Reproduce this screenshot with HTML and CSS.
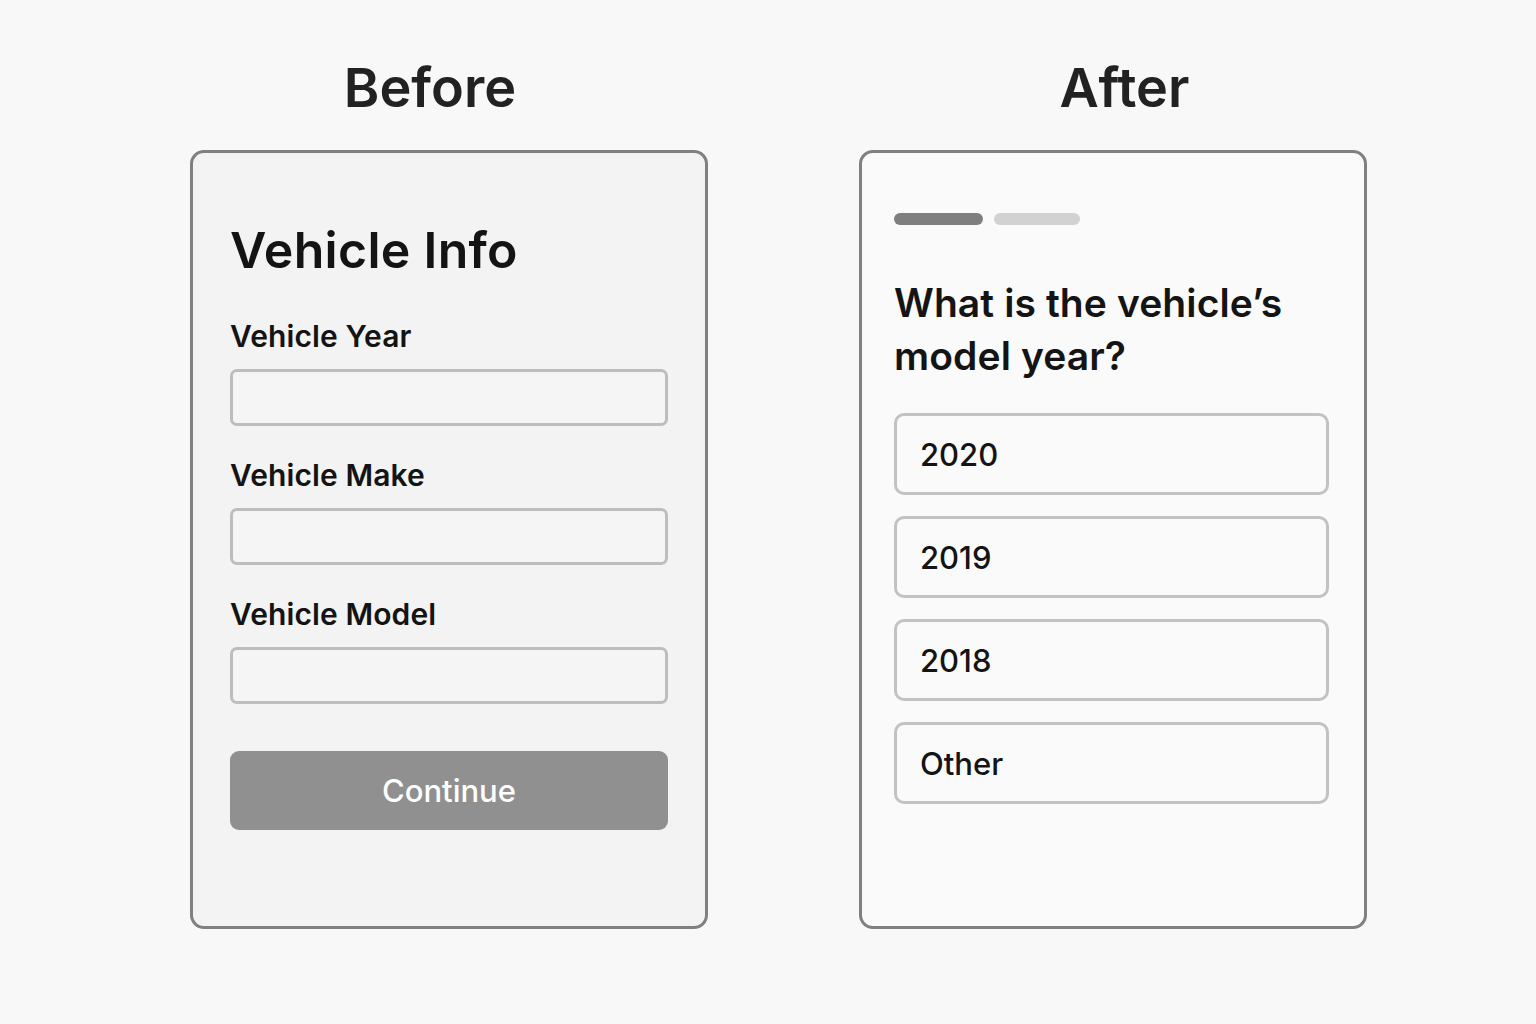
FILE: index.html
```html
<!DOCTYPE html>
<html lang="en">
<head>
<meta charset="utf-8">
<title>Before / After</title>
<link rel="stylesheet" href="styles.css">
</head>
<body>
<main class="compare">
  <section class="col col-before">
    <h2 class="col-title title-before">Before</h2>
    <div class="card card-before">
      <h1 class="form-title">Vehicle Info</h1>
      <label class="field-label">Vehicle Year</label>
      <div class="field-input"></div>
      <label class="field-label">Vehicle Make</label>
      <div class="field-input"></div>
      <label class="field-label">Vehicle Model</label>
      <div class="field-input"></div>
      <button class="btn-continue">Continue</button>
    </div>
  </section>
  <section class="col col-after">
    <h2 class="col-title title-after">After</h2>
    <div class="card card-after">
      <div class="progress">
        <span class="bar bar-done"></span>
        <span class="bar bar-todo"></span>
      </div>
      <h1 class="question">What is the vehicle’s<br>model year?</h1>
      <div class="options">
        <div class="option">2020</div>
        <div class="option">2019</div>
        <div class="option">2018</div>
        <div class="option">Other</div>
      </div>
    </div>
  </section>
</main>
</body>
</html>
```
FILE: styles.css
```css
* { box-sizing: border-box; }
html, body { margin: 0; padding: 0; }
body {
  background: #f8f8f8;
  font-family: Inter, "Noto Sans", "Liberation Sans", sans-serif;
  color: #141414;
  width: 1536px;
  height: 1024px;
  overflow: hidden;
}
.compare {
  display: flex;
  padding: 58px 0 0 190px;
  gap: 151px;
}
.col { display: flex; flex-direction: column; }
.col-before { width: 518px; }
.col-after { width: 508px; }
.col-title {
  margin: 0 0 32px;
  font-size: 54px;
  line-height: 60px;
  font-weight: 600;
  color: #222;
  text-align: center;
}
.title-before { padding-right: 38px; }
.title-after { padding-left: 23px; }

.card {
  height: 779px;
  border: 3px solid #808080;
  border-radius: 14px;
}
.card-before {
  background: #f3f3f3;
  padding: 67px 37px 0;
  display: flex;
  flex-direction: column;
}
.form-title {
  margin: 0 0 38px;
  font-size: 50px;
  line-height: 60px;
  font-weight: 600;
  letter-spacing: 0.3px;
}
.field-label {
  font-size: 30px;
  line-height: 36px;
  font-weight: 600;
  letter-spacing: 0.1px;
  margin-bottom: 15px;
}
.field-input {
  height: 57px;
  border: 3px solid #bdbdbd;
  border-radius: 7px;
  background: #f5f5f5;
  margin-bottom: 31px;
}
.btn-continue {
  margin-top: 16px;
  height: 79px;
  border: none;
  border-radius: 9px;
  background: #909090;
  color: #fff;
  font-family: inherit;
  font-size: 31px;
  font-weight: 500;
}

.card-after {
  background: #fafafa;
  padding: 60px 35px 0 32px;
}
.progress { display: flex; gap: 11px; }
.bar { height: 12px; border-radius: 6px; display: block; }
.bar-done { width: 89px; background: #7f7f7f; }
.bar-todo { width: 86px; background: #d2d2d2; }
.question {
  margin: 51px 0 31px 0;
  font-size: 39px;
  line-height: 53px;
  font-weight: 600;
  letter-spacing: 0.1px;
}
.options { display: flex; flex-direction: column; gap: 21px; }
.option {
  height: 82px;
  border: 3px solid #c2c2c2;
  border-radius: 10px;
  background: #fafafa;
  display: flex;
  align-items: center;
  padding-left: 23px;
  font-size: 31px;
  font-weight: 500;
}
```
